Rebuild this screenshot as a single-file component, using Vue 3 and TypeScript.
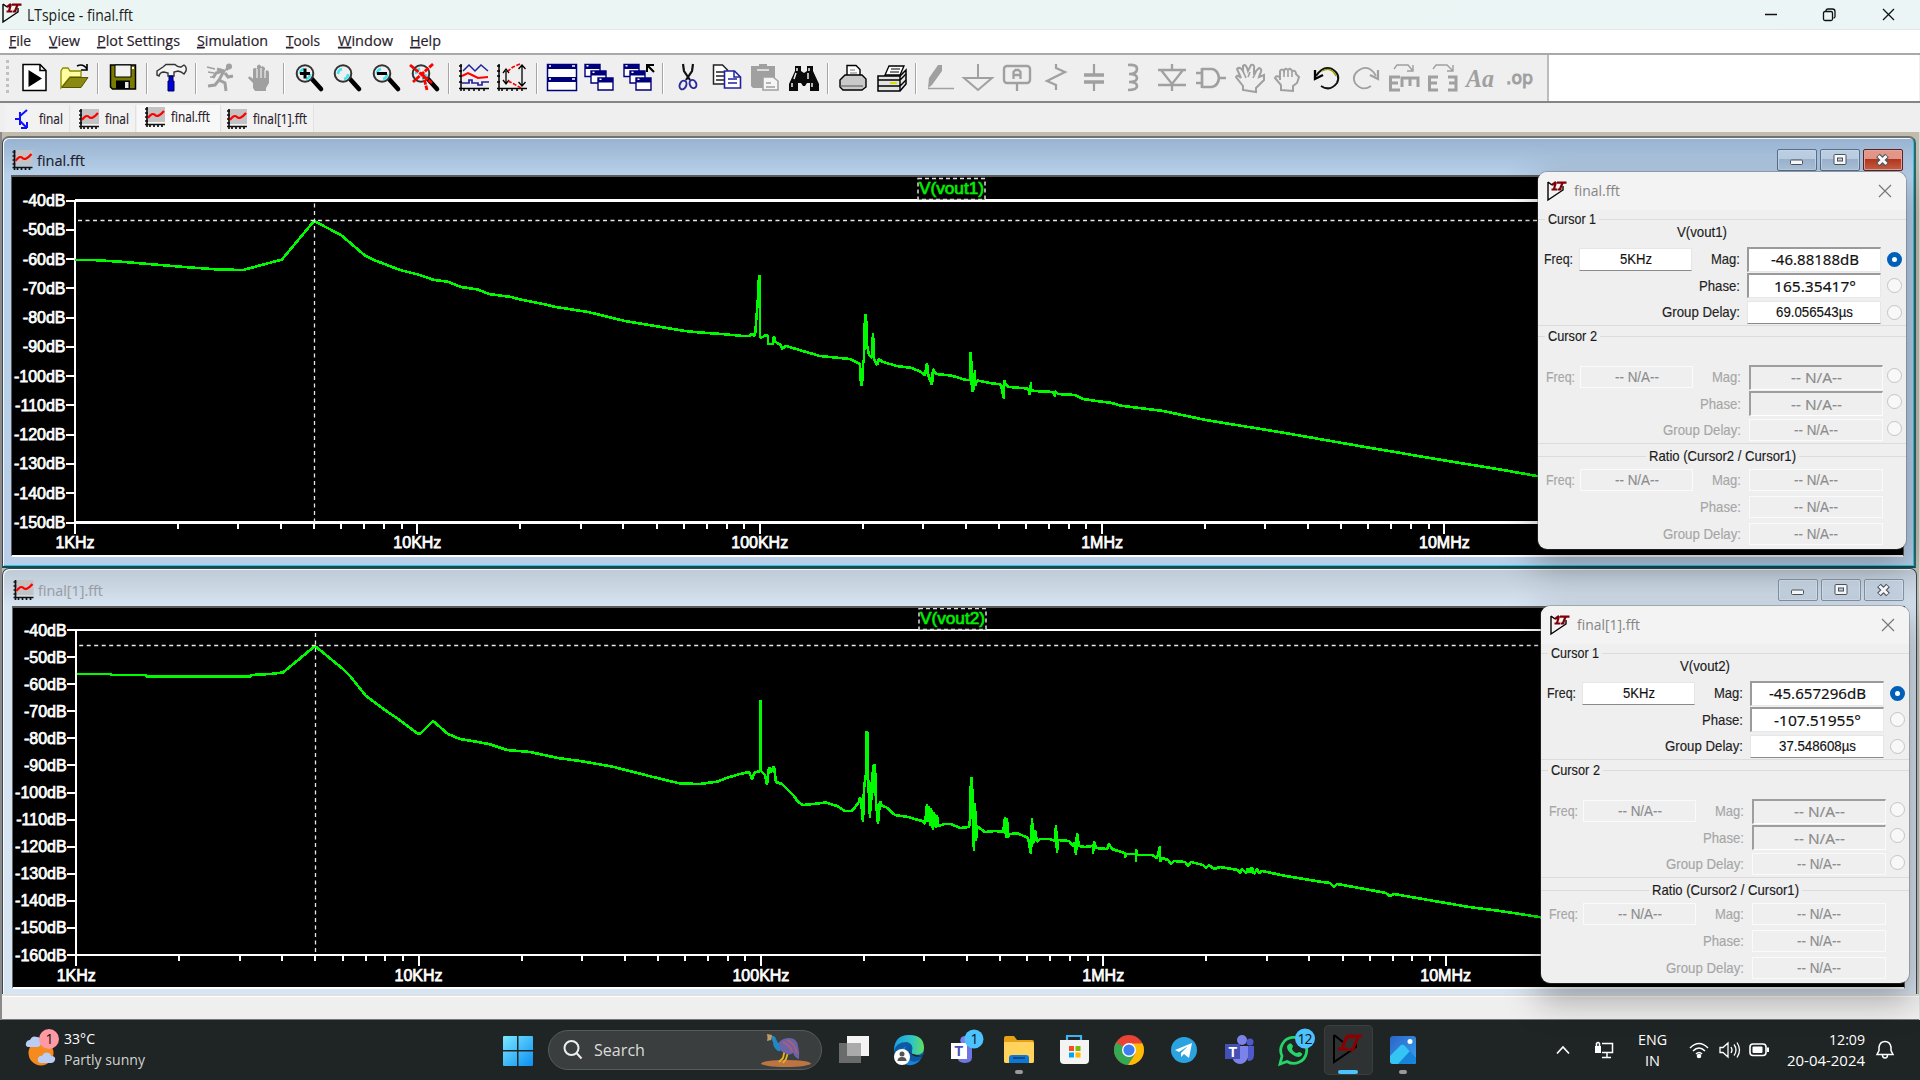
<script setup lang="ts">
import { h, type FunctionalComponent } from 'vue'

interface FitProps { t: string; w: number; s?: number; c?: string; f?: string; u?: boolean; k?: number }

/* Single line of text fitted to a known width */
const Fit: FunctionalComponent<FitProps> = (p) => {
  const s = p.s ?? 15
  const height = Math.round(s * 1.4)
  return h('svg', { width: p.w, height, style: 'display:block;overflow:visible;flex:none' }, [
    h('text', {
      x: 0, y: height / 2 + s * 0.36, 'font-size': s, fill: p.c ?? '#1b1b1b',
      'font-family': p.f ?? "'Open Sans', 'Noto Sans', sans-serif",
      textLength: p.w, lengthAdjust: 'spacingAndGlyphs',
      stroke: p.c ?? '#1b1b1b', 'stroke-width': p.k ?? 0,
    }, p.u ? [h('tspan', { 'text-decoration': 'underline' }, p.t[0]), p.t.slice(1)] : p.t),
  ])
}
Fit.props = ['t', 'w', 's', 'c', 'f', 'u', 'k']
const sans = "'Liberation Sans', Arial, sans-serif"
const noto = "'Noto Sans', sans-serif"

const menus = [
  { t: 'File', w: 22, p: 40 }, { t: 'View', w: 31, p: 48 }, { t: 'Plot Settings', w: 83, p: 100 },
  { t: 'Simulation', w: 71, p: 89 }, { t: 'Tools', w: 34, p: 52 }, { t: 'Window', w: 55, p: 72 }, { t: 'Help', w: 31, p: 40 },
]

const lens = (inner: string) => `<path d="M19 17l9 10" stroke="#000" stroke-width="4.6" stroke-linecap="round"/><circle cx="12" cy="11.500" r="8.300" fill="#efefef" stroke="#333" stroke-width="2"/><path d="M7 12q0-4 4-5M13 17q4-1 4-5" stroke="#3fe6ee" stroke-width="2.600" fill="none"/>${inner}`
const winBox = (x: number, y: number) => `<path d="M${x} ${y}h15v12h-15z" fill="#fff" stroke="#00007b" stroke-width="1.400"/><path d="M${x} ${y}h15v4.500h-15z" fill="#00007b"/><path d="M${x + 1.5} ${y + 1.3}h2" stroke="#fff" stroke-width="1.500"/>`
const G = '#a0a0a0'
const icons: Record<string, string> = {
  run: '<path d="M4 2.500h17l6 6v20H4z" fill="#fff" stroke="#000" stroke-width="1.500"/><path d="M21 2.500v6h6" fill="none" stroke="#000" stroke-width="1.500"/><path d="M9.500 8v17l13.500-8.500z" fill="#000"/>',
  open: '<path d="M3 25V9l2-3h5l2 3h11v6H12L3 26z" fill="#ffffa0" stroke="#8b8b00" stroke-width="1.300"/><path d="M4 25.500l8-10h18l-7 10z" fill="#8a8a12" stroke="#555500"/><path d="M19 4q6-3 10 3m0-5v6h-6" fill="none" stroke="#000" stroke-width="1.600"/>',
  save: '<path d="M3.500 3h25v24h-23l-2-2z" fill="#7b7b00" stroke="#000" stroke-width="1.500"/><path d="M8 3h16v12H8z" fill="#f2f2f2" stroke="#000"/><path d="M9 18.500h14V27H9z" fill="#000"/><path d="M18 20h3.500v6H18z" fill="#e8e8e8"/><path d="M25 5h2v2h-2z" fill="#fff"/>',
  hammer: '<path d="M1 9l6-4 3-2.500h9q3 3 6 2.500l3-2q3 2 2 6l-2 3-3-2-3-1-4 1v4h-6v-3l-4-1q-4 0-5 4l-2-1z" fill="#f4f4f4" stroke="#333" stroke-width="1.400"/><path d="M13 14h4v5h1v10h-6V19h1z" fill="#0000d8" stroke="#000050"/>',
  runner: `<g fill="none" stroke="${G}" stroke-width="3"><path d="M24 5l-3 3M12 7l7 2-5 9 6 3 1 8M14 18l-4 5-7 1M20 11l3 4 5-1M18 9l-7 2-3 5"/></g><circle cx="24" cy="4.500" r="3" fill="${G}"/><path d="M2 5l8 2M3 10l6 1M5 15l4 0" stroke="${G}" stroke-width="1.300"/>`,
  stop: `<path d="M9 26v-5l-5-5q1-3 4 0l1 1V7q2-2 4 0V4q2-3 4 0v1q2-2 4 1v3q3-2 4 1v11l-3 5v3H11z" fill="${G}"/><path d="M13 7v9M17 6v10M21 8v8" stroke="#efefef" stroke-width="1.200"/>`,
  zin: lens('<path d="M7 11.500h10M12 6.500v10" stroke="#000" stroke-width="3"/>'),
  zpan: lens(''),
  zout: lens('<path d="M7 11.500h10" stroke="#000" stroke-width="3"/>'),
  zfit: lens('<path d="M1 3l22 18M24 2L4 20M14 12l4 16" stroke="#f00" stroke-width="2.800" stroke-dasharray="5 1"/>'),
  traces: '<path d="M3 2v27M1 26.500h30M6 26v3M11 26v3M16 26v3M21 26v3M26 26v3M1 4h3M1 9h3M1 14h3M1 20h3" stroke="#000" stroke-width="1.500" fill="none"/><path d="M5 9l6-6 6 6 6-6 7 6" stroke="#22229c" stroke-width="1.500" fill="none"/><path d="M4 14l6-3 4 2 6 3 10-1" stroke="#f00" stroke-width="2" fill="none"/><path d="M4 21h7v-3h3v3h6v2h4v-3h7" stroke="#22229c" stroke-width="1.700" fill="none"/>',
  scale: '<path d="M3 2v27M1 26.500h30M6 26v3M11 26v3M16 26v3M21 26v3M26 26v3M1 4h3M1 9h3M1 14h3M1 20h3" stroke="#000" stroke-width="1.500" fill="none"/><path d="M10 9v12M7 11l3-4 3 4M7 18l3 4 3-4M26 3v21M22.500 7L26 3l3.500 4M22.500 20l3.500 4 3.500-4" stroke="#000" stroke-width="1.300" fill="none"/><path d="M24 2l-7 3-5 4M12 19l6 3 7 4" stroke="#f00" stroke-width="1.700" fill="none" stroke-dasharray="4 1.500"/>',
  tile: '<path d="M1.500 2.500h29v26h-29z" fill="#fff" stroke="#00007b" stroke-width="1.500"/><path d="M1 2h30v5H1zM1 15h30v5H1z" fill="#00007b"/><path d="M3 4h2M26 4h3M3 17h2M26 17h3" stroke="#fff" stroke-width="1.500"/>',
  cascade: winBox(1, 2.5) + winBox(7, 9) + winBox(14, 16),
  closeall: winBox(1, 2.5) + winBox(7, 9) + winBox(13, 16) + '<path d="M24 10V3h7M24.500 3.500L31 10" stroke="#000" stroke-width="2" fill="none"/>',
  cut: '<path d="M11 2l1 7 6 9M21 2l-1 7-6 9" stroke="#111" stroke-width="2.200" fill="none"/><ellipse cx="11" cy="23" rx="3.200" ry="4.500" transform="rotate(25 11 23)" fill="none" stroke="#2b2ba0" stroke-width="2"/><ellipse cx="21" cy="22" rx="3.200" ry="4.200" transform="rotate(-25 21 22)" fill="none" stroke="#2b2ba0" stroke-width="2"/>',
  copy: '<path d="M2.500 3h9l5 5v14h-14z" fill="#fff" stroke="#222" stroke-width="1.500"/><path d="M5 10h8M5 14h8M5 18h8" stroke="#222" stroke-width="1.500"/><path d="M13.500 9h10l6 6v11h-16z" fill="#fff" stroke="#2222a0" stroke-width="1.600"/><path d="M23 9v6h6M17 17h9M17 21h9" stroke="#2222a0" stroke-width="1.500" fill="none"/>',
  paste: `<path d="M2 4h8V2h8v2h8v22H4l-2-2z" fill="${G}"/><path d="M8 8h12" stroke="#efefef" stroke-width="1.500"/><path d="M14 15h10l5 4v9H14z" fill="#f5f5f5" stroke="${G}" stroke-width="1.500"/><path d="M17 21h5M17 25h9" stroke="${G}" stroke-width="1.500"/>`,
  find: '<path d="M7 4h6v5l3 2 3-2V4h6v5l6 13v7h-9v-8h-3l-2 3h-2l-2-3h-3v8H1v-7L7 9z" fill="#0a0a0a"/><path d="M9 6v3M21 6v3M8 11l-2 6M20 11v6M4 21v4M24 21v4" stroke="#eee" stroke-width="1.500"/>',
  print: '<path d="M10 14V3.500h9l4 4V14" fill="#fff" stroke="#000" stroke-width="1.400"/><path d="M13 8h5M13 11h7" stroke="#777"/><path d="M3 18l5-5h17l4 4v8l-4 3H6l-3-3z" fill="#c9c9c9" stroke="#000" stroke-width="1.400"/><path d="M3 24h23" stroke="#555"/>',
  printer: '<path d="M2 14h22l6-6v14l-6 7H2z" fill="#e4e4e4" stroke="#000" stroke-width="1.500"/><path d="M9 13l4-9h15l-4 9z" fill="#fff" stroke="#000" stroke-width="1.300"/><path d="M15 7h9M14 10h9" stroke="#000"/><path d="M2 18h22l6-6M2 24h22l6-6M24 14v15" fill="none" stroke="#000" stroke-width="1.400"/><path d="M14 21h7" stroke="#e0e000" stroke-width="2"/>',
  pencil: `<path d="M3 26l1-10 9-13h4v6L7 23z" fill="${G}"/><path d="M3 26.500h26" stroke="${G}" stroke-width="1.500"/>`,
  gnd: `<path d="M15 2v13M1 16h28L15 28z" fill="none" stroke="${G}" stroke-width="2"/>`,
  label: `<rect x="2" y="4" width="26" height="17" rx="3" fill="none" stroke="${G}" stroke-width="2.400"/><path d="M15 21v8M11.500 17v-7l2-2h3l2 2v7M12 13h7" fill="none" stroke="${G}" stroke-width="2.300"/>`,
  res: `<path d="M15 2v4l9 4-18 9 9 4v5" fill="none" stroke="${G}" stroke-width="2.200"/>`,
  cap: `<path d="M15 2v11M15 20v9" stroke="${G}" stroke-width="2.200"/><path d="M5 13h20M5 20h20" stroke="${G}" stroke-width="3.500"/>`,
  ind: `<path d="M10 3q9-1 9 4t-8 5q8 0 8 4t-8 4q8 0 8 4t-9 4" fill="none" stroke="${G}" stroke-width="2.600"/>`,
  diode: `<path d="M16 2v6M2 8h28M5 8l11 14L27 8M2 23h28M16 22v7" fill="none" stroke="${G}" stroke-width="2.300"/>`,
  gate: `<path d="M7 6v20M7 7h10q6 1 7 9-1 8-7 9H7M1 11h6M1 21h6M24 16h7" fill="none" stroke="${G}" stroke-width="2.700"/>`,
  move: `<path d="M9 28v-4l-7-9q1-3 5 1L3 7q3-3 6 2V4q3-3 5 5l3-6q4-1 3 4v4l5-5q4 1 1 6l-1 3 5-2v5l-8 8v4z" fill="#efefef" stroke="${G}" stroke-width="2"/><path d="M9 9l3 7M16 10l-2 5M22 10l-3 6" stroke="${G}" stroke-width="1.600"/>`,
  drag: `<path d="M9 28v-5l-6-7q1-3 5-1v3V9q2-3 4 0 1-4 4-1 2-3 4 1 4-1 4 3l3 3-2 6-4 3v5z" fill="#efefef" stroke="${G}" stroke-width="2"/><path d="M12 9v6M16 9v6M20 10v5" stroke="${G}" stroke-width="1.600"/>`,
  undo: '<path d="M5 14Q12 3 21 7q9 5 5 14-7 9-16 3" fill="none" stroke="#111" stroke-width="2"/><path d="M11 9q9-5 14 5" stroke="#a0a000" stroke-width="1.400" fill="none"/><path d="M4 8v9l8-4" fill="none" stroke="#000" stroke-width="2.300"/>',
  redo: `<path d="M26 14Q20 3 11 7 1 12 5 21q7 9 16 3" fill="none" stroke="${G}" stroke-width="1.800"/><path d="M28 8v9l-8-4" fill="none" stroke="${G}" stroke-width="2.200"/>`,
  rotate: `<path d="M6 7l3-4h11l5 6m0-6v6h-6" fill="none" stroke="${G}" stroke-width="1.400"/><path d="M12 15H2.500v13H12M3 21h7M30 25V16H14v9M22 16v8" fill="none" stroke="${G}" stroke-width="3"/>`,
  mirror: `<path d="M6 7l3-4h11l6 6m0-6v6h-6" fill="none" stroke="${G}" stroke-width="1.400"/><path d="M11 15H2.500v13H11M3 21h7M21 15h8v13h-8M28 21h-6" fill="none" stroke="${G}" stroke-width="3"/>`,
  text: `<text x="1" y="25" font-family="Liberation Serif, serif" font-size="25" font-weight="bold" font-style="italic" fill="${G}" textLength="28" lengthAdjust="spacingAndGlyphs">Aa</text>`,
  op: `<text x="2" y="22" font-family="DejaVu Sans, sans-serif" font-size="18" fill="${G}" stroke="${G}" stroke-width="1" textLength="27" lengthAdjust="spacingAndGlyphs">.op</text>`,
}
const tools = 'run open | save | hammer | runner stop | zin zpan zout zfit | traces scale | tile cascade closeall | cut copy paste find | print printer | pencil gnd label res cap ind diode gate move drag undo redo rotate mirror text op'.split(' ')

const waveIcon = '<path d="M3 0h17v15H3z" fill="#c3c3c3"/><path d="M2 0v20M0 17.500h20M0 2h3M0 6h3M0 10h3M0 14h3M5 17v3M9 17v3M13 17v3M17 17v3" stroke="#111" stroke-width="1.700" fill="none"/><path d="M3 11q4-6 7-3t9-4" stroke="#f00" stroke-width="2.200" fill="none"/>'
const ltIcon = '<path d="M1 1v18l6-4 9-6V5M1 1l4 3" fill="none" stroke="#000" stroke-width="1.400"/><path d="M9 1L7 8M4.500 8.500h6M5 4l4-3M10 1.700h9.500M15.500 2l-2.500 6M11 8.500h3.500" fill="none" stroke="#7d0008" stroke-width="2.200"/>'

const tabs = [
  { t: 'final', w: 24, p: 65, sch: true, on: false },
  { t: 'final', w: 24, p: 65, sch: false, on: false },
  { t: 'final.fft', w: 39, p: 84, sch: false, on: true },
  { t: 'final[1].fft', w: 54, p: 92, sch: false, on: false },
]

const trace1 = '75,260 93,260 125,262 178,266.500 218,269.500 243,270 282,259.500 314,221 341,235 365,255.500 374,260 400,270 418,274.500 434,280 447,281.500 461,287 478,289.500 489,294 511,297 520,299.500 541,303.500 556,307 588,312 625,321 661,327 685,331 700,332.500 722,334 743,336 749,336 752,334 755,336 756.500,317 758,297 759,276 760,276 760,337.500 763,337 765,335 768,336 768,344 773,344 774,336 775.500,342 781,345 782,349 786,346 791,347.500 820,356 850,359 860,364 861,385 862,385 863,364 864,359 865,315 866,315 867,345 869,355 872,358 873,333 874,359 877,365 879,359 883,362 897,366 912,368 921,372 925,375 927,363 928,374 930,380 932,385 933,369 936,374 951,375.500 966,380 970,380 970,353 971,353 972,392 974,388 975,370 975,386 977,380.500 990,383 1001,384.500 1003,395 1004,399 1004,380 1006,385 1009,387 1028,388.500 1030,395 1031,382 1031,390 1034,391 1053,392 1055,396.500 1055,391 1058,394 1075,395 1083,399 1100,401.500 1112,403 1120,405.500 1163,411 1206,420 1285,433 1365,447 1445,460.500 1500,469.500 1540,476.500'
const trace2 = '77,674 110,674 112,675 146,675 147,676.500 250,676.500 252,675 270,674 283,672.500 315,646 343,669 350,676 366,696 385,710 401,721 418,734 421,733 433,721 448,734 460,739 475,741.500 489,744 507,750 530,752 558,758 580,761 612,766.500 649,776 680,783.500 700,784 718,781.500 728,777.500 740,774 749,772 752,779 755,772 760,771.500 760,701 761,701 761,771 765,775 767,785 769,767 771,772 774,766 776,782 782,784 794,796 798,802 803,805 813,804 826,802.500 837,806 845,811 852,811 859,802 860,797 862,810 863,822 864,788 866,774 866,732 867.500,732 868,775 870,818 871,782 872,800 873,766 875,765 876,802 878,824 880,801 882,806 886,807 895,815 908,817 918,820 923,821 925,824 927,804 928,822 929,806 930,826 931,808 933,830 934,812 936,828 937,815 938,826 945,824 951,824 960,828 969,827 970,820 971,778 972,778 973,828 974,851 975,803 976,841 977,826 985,832 995,831 1003,832 1004,826 1005,817 1006,838 1007,818 1008,838 1009,834 1018,833.500 1028,838 1031,854 1032,818 1033,844 1035,830 1037,842 1040,839 1050,839 1055,841 1056,825 1057,853 1058,840 1069,841 1073,846 1075,842 1076,855 1077,833 1079,846 1085,847 1093,846 1093,854 1094,841 1096,848 1107,849 1109,844 1112,849 1118,851 1125,853 1125,858 1126,854 1136,854 1136,862 1136,849 1137,855 1152,855 1157,858 1160,846 1160,862 1162,858 1168,860 1171,864 1174,861 1185,862 1188,866 1191,862 1203,865 1206,868 1209,865 1214,869 1220,867 1238,870 1240,873 1242,869 1246,873 1248,868 1250,873 1252,867 1254,874 1257,869 1259,873 1262,871 1286,876 1322,882 1330,883 1334,887 1337,884 1365,889 1386,893 1390,896 1394,894 1440,902 1469,907 1500,911 1520,914 1542,917.500'

const mk = (o: { id: number; title: string; tw: number; x: number; y0: number; y1: number; steps: number; cx: number; cy: number; box: string; sig: string; pts: string; lx: number; ly: number; lh: number; base: number }) => ({
  ...o,
  rows: Array.from({ length: o.steps + 1 }, (_, i) => ({ t: `-${40 + i * 10}dB`, y: o.y0 + ((o.y1 - o.y0) * i) / o.steps })),
  majors: ['1KHz', '10KHz', '100KHz', '1MHz', '10MHz'].map((t, i) => ({ t, x: o.x + i * 342.35 })),
  minors: Array.from({ length: 5 }, (_, d) => [2, 3, 4, 5, 6, 7, 8, 9].map((n) => o.x + (d + Math.log10(n)) * 342.35)).flat().filter((x) => x < 1600),
})
const wins = [
  mk({ id: 1, title: 'final.fft', tw: 48, x: 75, y0: 200.5, y1: 522.5, steps: 11, cx: 314.5, cy: 220.5, box: '12 177 1891 378', sig: 'V(vout1)', pts: trace1, lx: 918, ly: 178.5, lh: 21, base: 548 }),
  mk({ id: 2, title: 'final[1].fft', tw: 65, x: 76.2, y0: 630, y1: 955, steps: 12, cx: 315.5, cy: 645.5, box: '13 608 1891 379', sig: 'V(vout2)', pts: trace2, lx: 919, ly: 608.5, lh: 21, base: 981 }),
]

const labels = [
  { t: 'Mag:', w: 29 }, { t: 'Phase:', w: 41 }, { t: 'Group Delay:', w: 78 },
]
const na = [{ t: '-- N/A--', w: 51 }, { t: '-- N/A--', w: 51 }, { t: '-- N/A--', w: 44 }]
const dialogs = [
  { id: 1, title: 'final.fft', tw: 46, sig: 'V(vout1)', vals: [{ t: '-46.88188dB', w: 88 }, { t: '165.35417°', w: 82 }, { t: '69.056543µs', w: 77 }] },
  { id: 2, title: 'final[1].fft', tw: 63, sig: 'V(vout2)', vals: [{ t: '-45.657296dB', w: 97 }, { t: '-107.51955°', w: 87 }, { t: '37.548608µs', w: 77 }] },
]
const groups = (d: (typeof dialogs)[number]) => [
  { k: 1, head: 'Cursor 1', hw: 48, vals: d.vals, freq: '5KHz', fw: 32, live: true },
  { k: 2, head: 'Cursor 2', hw: 49, vals: na, freq: '-- N/A--', fw: 44, live: false },
  { k: 3, head: 'Ratio (Cursor2 / Cursor1)', hw: 147, vals: na.map((v) => ({ ...v, w: 44 })), freq: '-- N/A--', fw: 44, live: false },
]

const teams = '<circle cx="21" cy="8" r="5" fill="#7b83eb"/><circle cx="29" cy="10" r="3.500" fill="#5059c9"/><path d="M23 14h10v9q0 6-6 6z" fill="#5059c9"/><path d="M13 14h14v11q-2 7-8 7t-8-7z" fill="#7b83eb"/><path d="M4 12h15v15H4z" fill="#4550b5"/><text x="7.500" y="25" font-size="14" font-weight="bold" font-family="Liberation Sans, sans-serif" fill="#fff">T</text>'
const apps = [
  { k: 'view', svg: '<path d="M11 4h22v20H11z" fill="#f4f4f4"/><path d="M3 11h22v20H3z" fill="#8a8a8a" opacity=".7"/>' },
  { k: 'edge', svg: '<defs><linearGradient id="eg" x1="0" x2="1"><stop stop-color="#1b9de2"/><stop offset=".6" stop-color="#30c5c5"/><stop offset="1" stop-color="#63e05b"/></linearGradient></defs><circle cx="18" cy="18" r="15" fill="#0c59a4"/><path d="M3 19Q3 3 18 3t15 13q0 7-8 7-5 0-4-4 2-7-5-9Q5 10 3 19z" fill="url(#eg)"/><path d="M15 14q-5 8 3 14 6 4 12-1-5 7-13 6Q7 31 6 20z" fill="#1683d8"/><path d="M19 14q-3 7 4 10 5 2 9-1l3 3-5-2-12-3z" fill="#202424"/><circle cx="11" cy="25" r="8" fill="#fff"/><circle cx="11" cy="22" r="2.500" fill="#555"/><path d="M6.500 29q0-4 4.500-4t4.500 4z" fill="#555"/>' },
  { k: 't1', svg: '<g transform="translate(-1 4) scale(.9)"><path d="M18 8h12v16q0 6-8 6t-8-6z" fill="#6f76e0"/><circle cx="22" cy="5" r="5" fill="#7b83eb"/></g><path d="M5 11h16v16H5z" fill="#fff"/><text x="8.500" y="24" font-size="14" font-weight="bold" font-family="Liberation Sans, sans-serif" fill="#4550b5">T</text><circle cx="28" cy="7" r="9.500" fill="#4cc2ff"/><text x="24.500" y="12" font-size="14" font-family="Open Sans, sans-serif" fill="#111">1</text>' },
  { k: 'folder', dot: true, svg: '<path d="M3 6q0-2 2-2h8l3 4h15q2 0 2 2v19q0 2-2 2H5q-2 0-2-2z" fill="#e6a117"/><path d="M3 11q0-2 2-1h26q2 0 2 2v17q0 2-2 2H5q-2 0-2-2z" fill="#ffd35c"/><path d="M8 31v-5q0-3 3-3h14q3 0 3 3v5z" fill="#0f78d4"/><path d="M12 26h12" stroke="#084c8d" stroke-width="2"/>' },
  { k: 'store', svg: '<path d="M11 9V4h14v5" fill="none" stroke="#3cb4ef" stroke-width="2.200"/><path d="M4 8h29v20q0 4-4 4H8q-4 0-4-4z" fill="#f4f4f4"/><path d="M13 14h5v5h-5z" fill="#f25022"/><path d="M19.500 14h5v5h-5z" fill="#7fba00"/><path d="M13 20.500h5v5h-5z" fill="#00a4ef"/><path d="M19.500 20.500h5v5h-5z" fill="#ffb900"/>' },
  { k: 'chrome', svg: '<circle cx="18" cy="18" r="15" fill="#ea4335"/><path d="M5 10.500A15 15 0 0 0 17 33l7.500-12z" fill="#34a853"/><path d="M17 33A15 15 0 0 0 31.500 11.500H18l6.500 10z" fill="#fbbc04"/><circle cx="18" cy="18" r="7" fill="#fff"/><circle cx="18" cy="18" r="5.600" fill="#3b7ff0"/>' },
  { k: 'telegram', svg: '<circle cx="18" cy="18" r="13" fill="#2ba3e0"/><path d="M9 18l17-7-3 15-5-4-3 3v-4l7-7-9 6z" fill="#fff"/>' },
  { k: 'teams', svg: teams },
  { k: 'wa', svg: '<path d="M4 32l2-8a13 13 0 1 1 5 5.500z" fill="#1f2424" stroke="#25d366" stroke-width="2.800"/><path d="M13 12q2-2 4 2l-1 3q2 4 5 4l2-1q4 1 3 3-3 4-9 0t-6-8q0-2 2-3z" fill="#25d366"/><circle cx="29" cy="6.500" r="10" fill="#4cc2ff"/><text x="21.500" y="11.500" font-size="14" font-family="Open Sans, sans-serif" fill="#111" textLength="15">12</text>' },
  { k: 'lt', on: true, svg: '<path d="M4 3v27l22-15V8M4 3l9 7" fill="none" stroke="#000" stroke-width="2"/><path d="M17 4l-5 13M8 17h10M24 5l-7 0M17 4h15M28 5l-5 12M19 17.500h6" fill="none" stroke="#8b0000" stroke-width="3"/>' },
  { k: 'photos', dot: true, svg: '<defs><linearGradient id="ph" x2="1" y2="1"><stop stop-color="#2a66c8"/><stop offset="1" stop-color="#3aa0f0"/></linearGradient></defs><rect x="5" y="4" width="26" height="28" rx="3" fill="url(#ph)"/><path d="M5 24l11-11q2-1 4 1l11 13v3q0 2-2 2H8q-3 0-3-3z" fill="#35c5f4"/><path d="M13 32l12-13 6 7v3q0 3-3 3z" fill="#1684d8"/><circle cx="25" cy="9.500" r="2.500" fill="#fff"/>' },
]
</script>

<template>
  <div class="screen">
    <header class="title">
      <svg width="20" height="20" viewBox="0 0 20 20" v-html="ltIcon" />
      <Fit class="tt" t="LTspice - final.fft" :w="106" :s="15.500" />
      <span class="grow" />
      <svg class="ctl" width="130" height="14" viewBox="0 0 130 14" fill="none" stroke="#111" stroke-width="1.300">
        <path d="M0 6.500h12M118 1l11 11M129 1l-11 11" />
        <rect x="58.500" y="3.500" width="9" height="9" rx="1.500" /><path d="M61 3q0-2 2-2h4.500q2.500 0 2.500 2.500v5q0 1.500-1.500 1.500" />
      </svg>
    </header>

    <nav class="menu">
      <span v-for="m in menus" :key="m.t" :style="{ width: m.p + 'px' }"><Fit :t="m.t" :w="m.w" :s="15" c="#2a1d2c" :k="0.2" :u="true" /></span>
    </nav>

    <div class="toolrow">
      <div class="toolbar">
        <i class="grip" />
        <template v-for="(t, i) in tools" :key="i">
          <i v-if="t === '|'" class="sep" />
          <span v-else class="btn"><svg width="32" height="32" viewBox="0 0 32 32" fill="none" v-html="icons[t]" /></span>
        </template>
      </div>
      <div class="blank" />
    </div>

    <div class="tabs">
      <div v-for="(t, i) in tabs" :key="i" class="tab" :class="{ on: t.on }" :style="{ width: t.p + 'px' }">
        <svg v-if="t.sch" class="sch" width="24" height="20" viewBox="0 0 24 20" fill="none" stroke="#1010ff" stroke-width="2"><path d="M3 10h5M8 3v13M8 7l7-6M8 12l6 6M15 19v-6M15 19H9" /></svg>
        <svg v-else width="20" height="20" viewBox="0 0 20 20" v-html="waveIcon" />
        <Fit :t="t.t" :w="t.w" :s="15" c="#2a1d2c" :k="0.2" />
      </div>
    </div>

    <main class="mdi">
      <section v-for="w in wins" :key="w.id" class="win" :class="'w' + w.id">
        <div class="wtitle">
          <svg width="21" height="20" viewBox="0 0 20 20" v-html="waveIcon" />
          <Fit :t="w.title" :w="w.tw" :s="15" :c="w.id === 1 ? '#20202c' : '#9a9ea4'" :k="0.15" />
          <span class="grow" />
          <span class="wb"><svg width="16" height="14"><rect x="1.500" y="7" width="12" height="4.500" rx="1" fill="#fff" stroke="#4a5562" /></svg></span>
          <span class="wb"><svg width="16" height="14"><rect x="2" y="1.500" width="12" height="10" rx="1" fill="#fff" stroke="#4a5562" /><rect x="5.500" y="5" width="5" height="3" fill="#c6d4e4" stroke="#4a5562" /></svg></span>
          <span class="wb x"><svg width="16" height="14"><path d="M3 2.500l9 9M12 2.500l-9 9" stroke="#4a5562" stroke-width="5.200" /><path d="M3.500 3l8 8M11.500 3l-8 8" stroke="#fff" stroke-width="3" /></svg></span>
        </div>
        <svg class="plot" :viewBox="w.box" preserveAspectRatio="none">
          <g stroke="#fff" stroke-width="2.500" shape-rendering="crispEdges" fill="none">
            <path :d="`M${w.x} ${w.y0}H1910M${w.x} ${w.y1}H1910M${w.x} ${w.y0 - 1}V${w.y1 + 11}`" />
            <path v-for="r in w.rows" :key="r.t" :d="`M${w.x - 9} ${r.y}h9`" stroke-width="2" />
            <path v-for="m in w.majors" :key="m.t" :d="`M${m.x} ${w.y1}v11`" stroke-width="2" />
            <path v-for="m in w.minors" :key="m" :d="`M${m} ${w.y1}v6`" stroke-width="2" />
          </g>
          <g fill="#fff" stroke="#fff" stroke-width=".75" font-family="Liberation Sans, Arial, sans-serif" font-size="16">
            <text v-for="r in w.rows" :key="r.t" :x="w.x - 9.500" :y="r.y + 5.500" text-anchor="end">{{ r.t }}</text>
            <text v-for="m in w.majors" :key="m.t" :x="m.x" :y="w.base" text-anchor="middle">{{ m.t }}</text>
          </g>
          <polyline :points="w.pts" fill="none" stroke="#00fb00" stroke-width="2.600" stroke-linejoin="bevel" shape-rendering="crispEdges" />
          <path :d="`M${w.x + 3} ${w.cy}H1910M${w.cx} ${w.y0 + 3}V${w.y1}`" stroke="#e8e8e8" stroke-width="1.300" stroke-dasharray="4 3.500" />
          <rect :x="w.lx" :y="w.ly" width="67" :height="w.lh" fill="#000" stroke="#ddd" stroke-width="1.500" stroke-dasharray="4 3" />
          <text :x="w.lx + 1" :y="w.ly + 15.500" font-family="Liberation Sans, Arial, sans-serif" font-size="16" fill="#00f000" stroke="#00f000" stroke-width=".65" textLength="65" lengthAdjust="spacingAndGlyphs">{{ w.sig }}</text>
        </svg>
      </section>
      <div class="status" />
    </main>

    <aside v-for="d in dialogs" :key="d.id" class="dlg" :class="'d' + d.id">
      <div class="dtitle">
        <svg width="20" height="20" viewBox="0 0 20 20" v-html="ltIcon" />
        <Fit :t="d.title" :w="d.tw" :s="14.500" c="#858585" />
        <span class="grow" />
        <svg width="12" height="12" stroke="#777" stroke-width="1.200"><path d="M0 0l12 12M12 0L0 12" /></svg>
      </div>
      <div v-for="g in groups(d)" :key="g.k" class="grp" :class="'g' + g.k">
        <div class="ghead"><i class="l0" /><Fit :t="g.head" :w="g.hw" :s="14.500" :f="sans" :k="0.15" /><i class="l1" /></div>
        <div v-if="g.k === 1" class="sig"><Fit :t="d.sig" :w="50" :s="14.500" :f="sans" :k="0.15" /></div>
        <div v-for="(v, i) in g.vals" :key="i" class="row" :class="{ off: !g.live }">
          <span class="fl"><Fit v-if="i === 0" t="Freq:" :w="29" :s="14.500" :f="sans" :c="g.live ? '#222' : '#a6a6a6'" :k="0.15" /></span>
          <span class="box fb" :class="{ none: i !== 0 }"><Fit v-if="i === 0" :t="g.freq" :w="g.fw" :s="14.500" :f="sans" :c="g.live ? '#111' : '#8c8c8c'" :k="0.15" /></span>
          <span class="vl"><Fit :t="labels[i].t" :w="labels[i].w" :s="14.500" :f="sans" :c="g.live ? '#222' : '#a6a6a6'" :k="0.15" /></span>
          <span class="box vb" :class="{ sunk: g.k < 3 && i < 2 }"><Fit :t="v.t" :w="v.w" :s="g.k < 3 && i < 2 ? 15 : 14.500" :f="g.k < 3 && i < 2 ? noto : sans" :c="g.live ? '#111' : '#8c8c8c'" :k="0.15" /></span>
          <i v-if="g.k < 3" class="radio" :class="{ sel: g.live && i === 0 }" />
        </div>
      </div>
    </aside>

    <footer class="task">
      <div class="weather">
        <svg width="34" height="38" viewBox="0 0 34 38"><circle cx="16" cy="23" r="12.500" fill="#f58a1f" /><path d="M3 17q-3-1-2-4t4-3q2-5 7-3 4 0 4 5t-4 5z" fill="#b9cdf5" /><path d="M15 33q-3-1-2-5 2-3 4-2 2-5 7-3 2 1 2 3 5 0 4 4-1 3-4 3z" fill="#b9cdf5" /><circle cx="24" cy="9" r="10" fill="#ff99a4" /><text x="20.500" y="14" font-size="14" font-family="Open Sans, sans-serif" fill="#111">1</text></svg>
        <div><Fit t="33°C" :w="31" :s="15" c="#fff" /><Fit t="Partly sunny" :w="81" :s="15" c="#d0d3d3" /></div>
      </div>
      <svg class="start" width="30" height="30" viewBox="0 0 30 30"><defs><linearGradient id="wl" x2="1" y2="1"><stop stop-color="#7ae8ff" /><stop offset="1" stop-color="#0b8ff2" /></linearGradient></defs><path d="M0 1q0-1 1-1h13v14H0zM15.500 0H29q1 0 1 1v13H15.500zM0 15.500h14V30H1q-1 0-1-1zM15.500 15.500H30V29q0 1-1 1H15.500z" fill="url(#wl)" /></svg>
      <div class="search">
        <svg width="20" height="20" fill="none" stroke="#eee" stroke-width="2"><circle cx="8.500" cy="8" r="7" /><path d="M13.500 13l5 5.500" /></svg>
        <Fit t="Search" :w="51" :s="17" c="#dcdcdc" />
        <span class="grow" />
        <svg width="52" height="34" viewBox="0 0 52 34"><ellipse cx="26" cy="30.500" rx="25" ry="3.500" fill="#bd7443" /><path d="M25 16l-2 9-4 4M29 16l-3 10-3 4" stroke="#e8b21c" stroke-width="1.800" fill="none" /><path d="M17 12q4-7 12-7 8 0 9 8 2 6 1 13-4-1-6-6-4 3-8 0-6-2-8-8z" fill="#6b62a8" /><path d="M27 7q8 3 10 14M23 9q8 4 9 10" stroke="#a2607e" stroke-width="2" fill="none" /><path d="M10 3q5-1 6 3l4 8q2 5-2 4-5-3-5-9z" fill="#2188c4" /><path d="M7 1l5 1-1 5-4 1q1-3 0-7z" fill="#c49a63" /></svg>
      </div>
      <div class="apps">
        <span v-for="a in apps" :key="a.k" class="app" :class="{ cur: a.on }">
          <svg width="36" height="36" viewBox="0 0 36 36" v-html="a.svg" /><i v-if="a.dot" class="dot" /><i v-if="a.on" class="bar" />
        </span>
      </div>
      <span class="grow" />
      <svg class="chev" width="14" height="10" fill="none" stroke="#fff" stroke-width="1.700"><path d="M1 8.500l6-6.500 6 6.500" /></svg>
      <svg class="net" width="20" height="18" fill="none" stroke="#fff" stroke-width="1.500"><path d="M8 2.500h10.500v9H8M13 12v4M8 16.500h9" /><path d="M1 5h6v7H1z" fill="#fff" stroke="none" /><path d="M2.500 5V2.500q1.500-2 3 0V5" /></svg>
      <div class="lang"><Fit t="ENG" :w="29" :s="15" c="#fff" /><Fit t="IN" :w="15" :s="15" c="#fff" /></div>
      <svg class="sys" width="82" height="18" fill="none" stroke="#fff" stroke-width="1.600">
        <path d="M1 7q9-9 18 0M4 10q6-6 12 0M7 13q3-3 6 0" /><circle cx="10" cy="15" r="1.500" fill="#fff" />
        <path d="M31 6.500h3l5-4.500v14l-5-4.500h-3zM42 6q2 3 0 6M45 3.500q4 5.500 0 11M48 1.500q5 7.500 0 15" stroke-width="1.300" />
        <rect x="61" y="3" width="16" height="11.500" rx="3" /><rect x="63.500" y="5.500" width="10" height="6.500" rx="1" fill="#fff" stroke="none" /><path d="M79 6.500v4.500" stroke-width="2" />
      </svg>
      <div class="clock"><Fit t="12:09" :w="36" :s="15" c="#fff" /><Fit t="20-04-2024" :w="78" :s="15" c="#fff" /></div>
      <svg class="bell" width="18" height="20" fill="none" stroke="#fff" stroke-width="1.500"><path d="M1 14.500h16l-2-4V7Q14 1.500 9 1.500T3 7v3.500zM6.500 15q0 3 2.500 3t2.500-3" /></svg>
    </footer>
  </div>
</template>

<style>
body { margin: 0; overflow: hidden; background: #1f2424; }
</style>
<style scoped>
* { box-sizing: border-box; }
.screen { position: relative; width: 1920px; height: 1080px; display: flex; flex-direction: column; overflow: hidden; background: #efefef; }
.screen svg { flex: none; overflow: visible; }
.screen svg.plot { overflow: hidden; }
.grow { flex: 1; }
.title { height: 29px; flex: none; display: flex; align-items: center; background: linear-gradient(90deg, #ebf6f4, #ecf5f5); padding: 0 25px 0 2px; }
.title > svg:first-child { margin-top: -3px; }
.tt { margin-left: 5px; }
.menu { height: 26px; flex: none; display: flex; align-items: center; background: #fff; padding-left: 9px; border-bottom: 2px solid #a9a9a9; border-top: 1px solid #e4e8e8; }
.menu span { margin-top: -2px; }
.toolrow { height: 48px; flex: none; display: flex; border-bottom: 2px solid #858585; }
.toolbar { width: 1549px; display: flex; align-items: center; background: #efefef; border-right: 2px solid #bdbdbd; padding-left: 6px; }
.grip { width: 3px; height: 36px; margin-right: 6.7px; background: repeating-linear-gradient(#c0c0c0 0 3px, transparent 3px 6px); }
.btn { width: 38.630px; flex: none; display: flex; justify-content: center; }
.btn svg { margin-top: -1px; }
.sep { flex: none; width: 2px; height: 31px; margin: 0 4.250px; background: #a6a6a6; border-right: 1px solid #fff; }
.blank { flex: 1; background: #fff; margin-right: 1px; }
.tabs { height: 29px; flex: none; display: flex; gap: 1px; padding-left: 5px; background: #efefef; }
.tab { height: 27px; margin-top: 2px; display: flex; align-items: center; gap: 6px; padding-left: 8px; background: #f2f2f2; border-right: 1px solid #e2e2e2; }
.tab.on { background: #f8f8f8; padding-bottom: 4px; }
.tab:first-child { padding-left: 7px; }
.tab:last-child { padding-left: 5px; }
.sch { margin-right: -3px; }
.mdi { height: 888px; flex: none; display: flex; flex-direction: column; background: #c0bbab; border-left: 2px solid #8a8a8a; border-right: 1px solid #ddd; padding-top: 4px; }
.win { width: 1914px; flex: none; border: 1px solid #3a4750; border-radius: 7px 7px 0 0; display: flex; flex-direction: column; }
.w1 { height: 432px; border-top: 2px solid #6e7274; border-bottom: 2px solid #0d5055; border-right: 2px solid #2b6870; background: linear-gradient(#97b2d0, #b9d1ea 38px, #b9cfe9); box-shadow: inset 1px 1px #f4f8fc, inset -1px -1px #35c4dd; padding: 1px 11px 0 8px; }
.w2 { width: 1915px; height: 426px; background: linear-gradient(#becad6, #d7e4f1 38px, #d7e4f1); box-shadow: inset 1px 1px #f6fafc; padding: 1px 12px 0 9px; border-bottom: 0; }
.wtitle { height: 36px; flex: none; display: flex; align-items: center; }
.wtitle > svg:first-child { margin-right: 4px; margin-left: 1px; }
.w1 .wtitle { padding-top: 6px; }
.w2 .wtitle { padding-top: 4px; }
.wb { width: 40px; height: 22px; margin-left: 3px; display: flex; align-items: center; justify-content: center; border: 1px solid #57708c; border-radius: 2px; box-shadow: inset 0 0 0 1px #c5d7ea; background: linear-gradient(#bed0e4 45%, #9bb5d1 46%, #b5cbe3); }
.w1 .wb.x { border-color: #5d2322; box-shadow: inset 0 0 0 1px #e9a59b; background: linear-gradient(#e3988a 45%, #b5361d 46%, #ce6448); }
.w2 .wb { background: #c8d5e4; border-color: #8494aa; box-shadow: inset 0 0 0 1px #d7e2ee; }
.plot { width: 1893px; height: 382px; display: block; background: #000; border: 1px solid #5a5a5a; border-top-width: 2px; border-bottom: 2px solid #fff; }
.w2 .plot { height: 383px; border-left-color: #666; }
.status { flex: 1; background: #efefef; border-top: 2px solid #e0e0e0; border-bottom: 1px solid #777; box-shadow: inset 0 1px #fff; }
.dlg { position: absolute; width: 368px; height: 377px; border-radius: 9px; background: #efefef; overflow: hidden; box-shadow: 0 0 0 1px rgba(90, 90, 90, .35), 0 14px 34px 4px rgba(0, 0, 0, .3); display: flex; flex-direction: column; }
.d1 { left: 1538px; top: 172px; }
.d2 { left: 1541px; top: 606px; }
.dtitle { height: 38px; flex: none; background: #f3f3f3; display: flex; align-items: center; padding: 0 15px 0 9px; }
.dtitle > svg:first-child { margin-right: 7px; }
.grp { flex: none; border-bottom: 1px solid #dcdcdc; }
.g1 { height: 116px; }
.g2 { height: 118px; padding-top: 1px; }
.g3 { height: 105px; padding-top: 3px; border: 0; }
.ghead { height: 18px; display: flex; align-items: center; gap: 3px; }
.ghead svg { margin-top: -1px; }
.g2 .ghead { margin-bottom: 19px; }
.ghead i { height: 1px; background: #dcdcdc; }
.l0 { width: 7px; }
.g3 .l0 { width: 108px; }
.l1 { flex: 1; }
.sig { height: 18px; margin-top: -5px; margin-bottom: 5px; padding-left: 139px; display: flex; align-items: center; }
.row { height: 26.600px; display: flex; align-items: center; }
.g3 .row { height: 27px; }
.g3 .row:nth-child(2) { margin-top: 1px; }
.fl { width: 41px; padding-left: 6px; flex: none; }
.off .fl { padding-left: 8px; }
.box { display: flex; align-items: center; justify-content: center; flex: none; height: 23px; background: #fff; border: 1px solid #e6e6e6; border-bottom: 1px solid #8a8a8a; }
.fb { width: 113px; }
.vl { width: 48px; flex: none; display: flex; justify-content: flex-end; }
.vb { width: 134px; margin-left: 7px; }
.sunk { height: 25px; border: 1px solid #e8e8e8; border-top: 2px solid #9a9a9a; border-left: 2px solid #9a9a9a; }
.off .box { background: #efefef; border-color: #fafafa; height: 22px; }
.off .box.sunk { height: 25px; border-top-color: #9e9e9e; border-left-color: #9e9e9e; border-bottom-color: #fff; }
.off .vb { margin-left: 8px; }
.off .fb { margin-left: 1px; }
.box.none { visibility: hidden; }
.radio { width: 15px; height: 15px; margin-left: 6px; border-radius: 50%; border: 1px solid #c4c4c4; background: #f8f8f8; }
.off .radio { margin: -4px 0 0 4px; }
.radio.sel { border: 5px solid #005fb8; background: #fff; }
.task { height: 60px; flex: none; display: flex; align-items: center; background: #1f2424; padding: 0 26px 0 25px; }
.weather { width: 478px; display: flex; align-items: center; gap: 5px; margin-top: -2px; }
.start { margin-right: 15px; margin-top: 1px; }
.search { width: 274px; height: 40px; border-radius: 20px; border: 1px solid #565b5b; background: #3a3e3e; display: flex; align-items: center; gap: 11px; padding: 0 9px 0 14px; }
.apps { display: flex; margin-left: 5px; }
.app { position: relative; width: 48.900px; height: 50px; margin: 0 3px; border-radius: 5px; display: flex; align-items: center; justify-content: center; }
.cur { background: #2f3232; box-shadow: inset 0 0 0 1px #3b3e3e; }
.dot, .bar { position: absolute; bottom: 1px; left: 50%; width: 8px; height: 4px; margin-left: -4px; border-radius: 2px; background: #9a9a9a; }
.bar { width: 20px; margin-left: -10px; background: #4cc2ff; }
.chev { margin-right: 24px; }
.net { margin-right: 23px; }
.lang { width: 30px; margin-right: 22px; display: flex; flex-direction: column; align-items: center; }
.sys { margin-right: 16px; }
.clock { display: flex; flex-direction: column; align-items: flex-end; margin-right: 11px; }
</style>
